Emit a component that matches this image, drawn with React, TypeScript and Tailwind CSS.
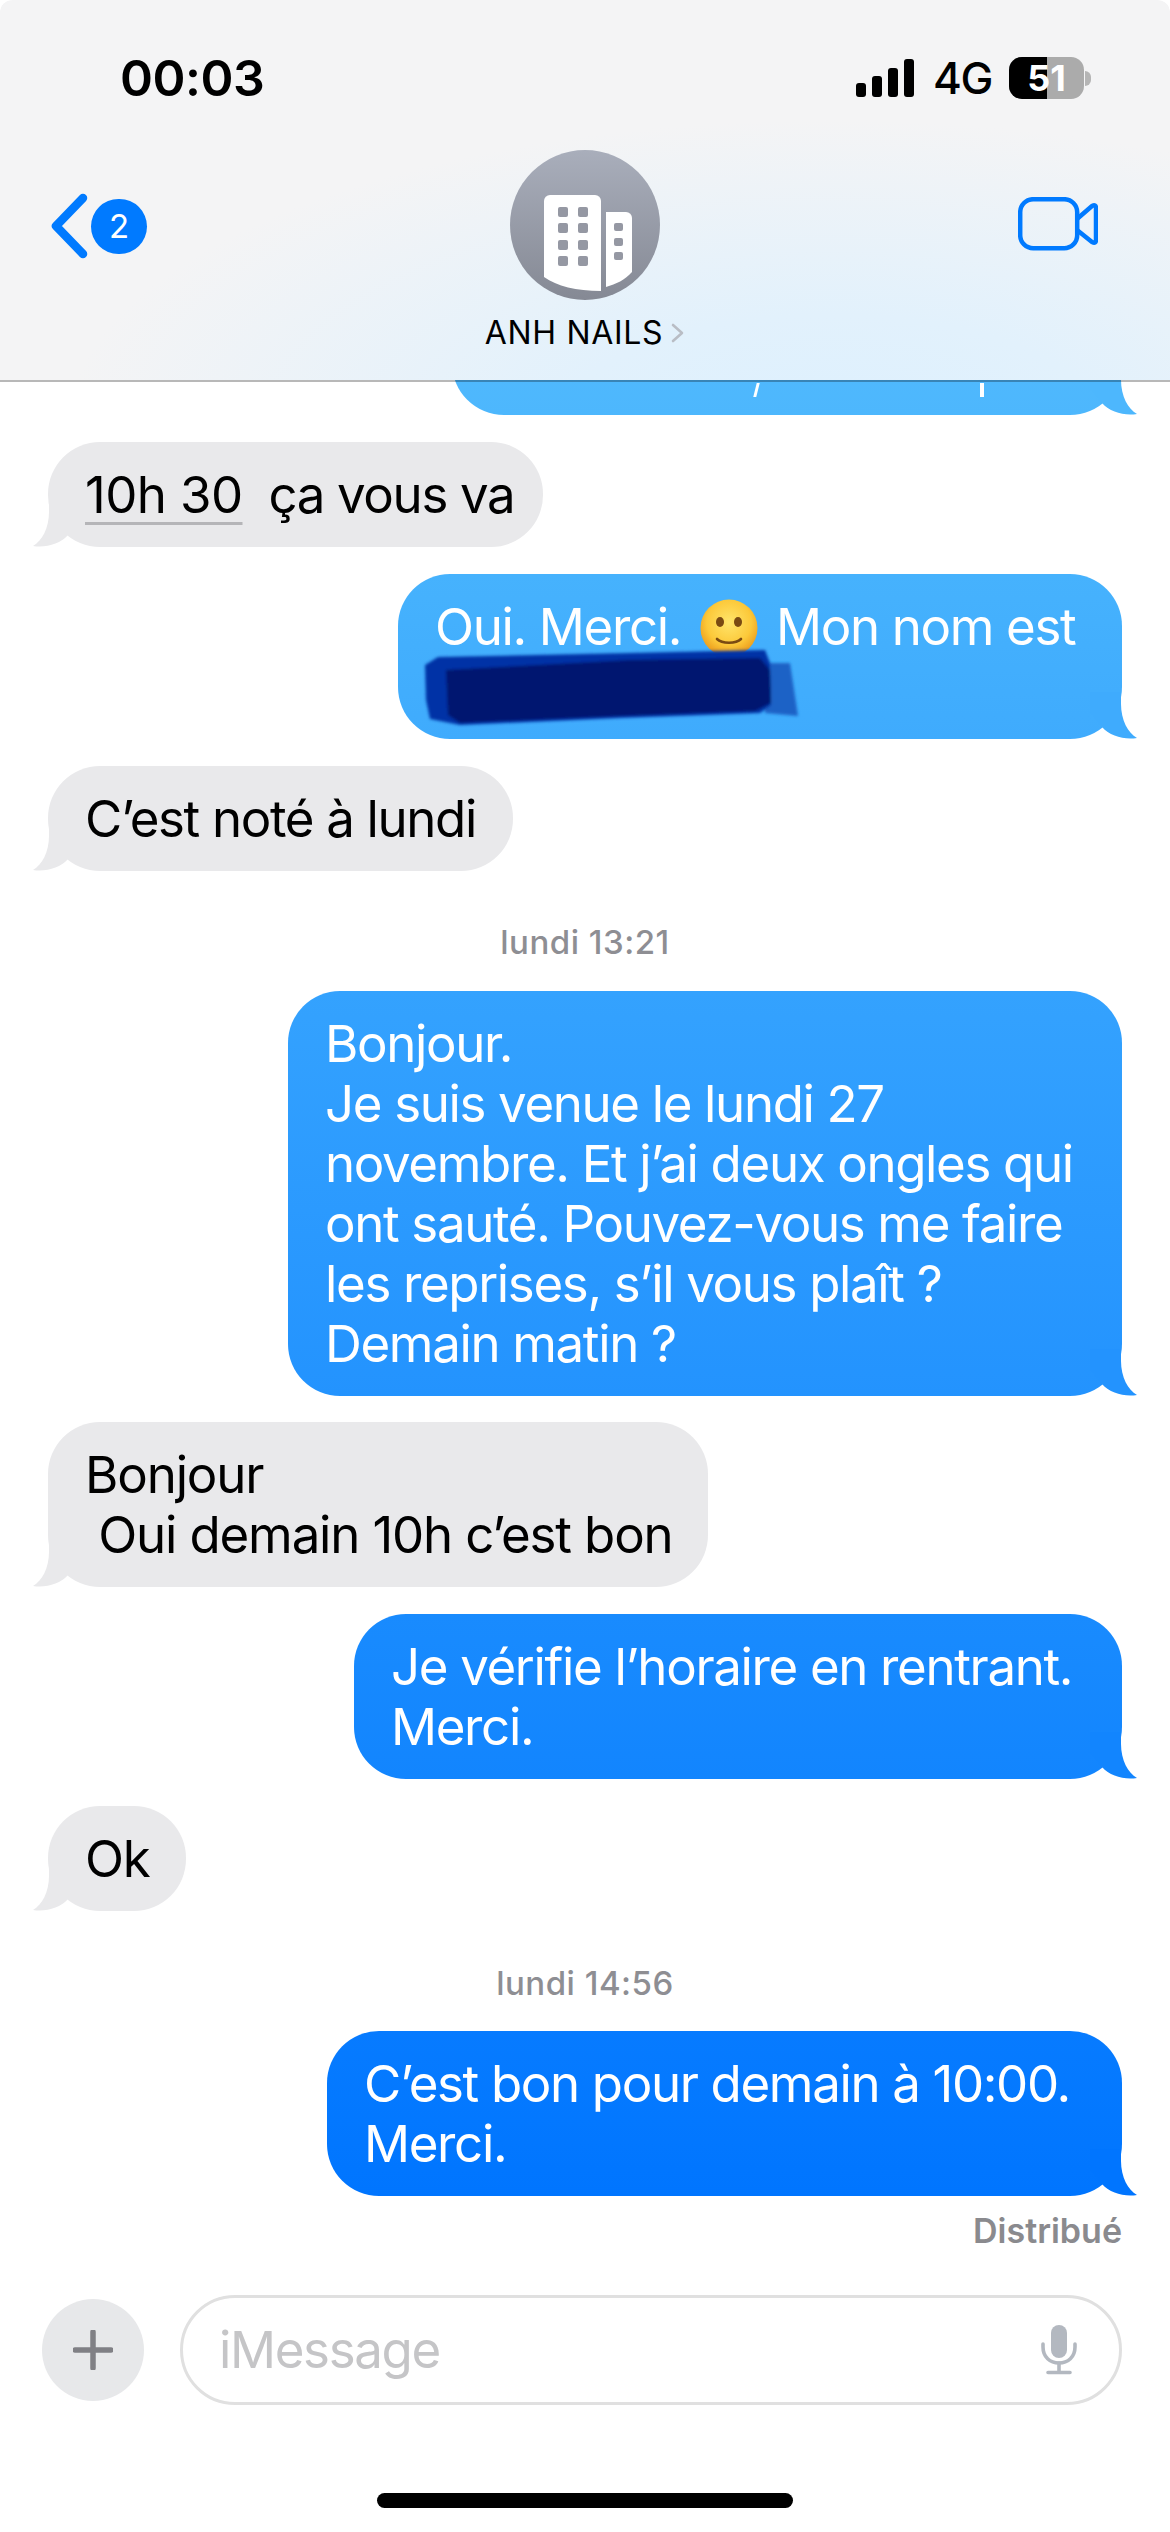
import React from "react";

function Tail({ side, color }: { side: "l" | "r"; color: string }) {
  return (
    <svg
      viewBox="0 0 50 47"
      className={`absolute bottom-0 w-[50px] h-[47px] ${color} ${side === "r" ? "right-[-18px]" : "left-[-18px] -scale-x-100"}`}
    >
      <path fill="currentColor" d="M31 0 L31 12 C31 28 38 41 47 46 C34 48 20 44 12 35 L0 20 L0 0 Z" />
    </svg>
  );
}

function Sent({ bg, tail, className, children }: { bg: string; tail: string; className?: string; children: React.ReactNode }) {
  return (
    <div className={`relative self-end rounded-[52px] pl-[37px] pr-[37px] pt-[23px] pb-[22px] text-white whitespace-nowrap ${bg} ${className ?? ""}`}>
      {children}
      <Tail side="r" color={tail} />
    </div>
  );
}

function Received({ className, children }: { className?: string; children: React.ReactNode }) {
  return (
    <div className={`relative self-start rounded-[52px] bg-[#e9e9eb] px-[37px] pt-[23px] pb-[22px] text-black whitespace-nowrap ${className ?? ""}`}>
      {children}
      <Tail side="l" color="text-[#e9e9eb]" />
    </div>
  );
}

function Smile() {
  return (
    <svg viewBox="0 0 58 58" className="inline-block w-[58px] h-[58px] align-[-12px] ml-[6px] mr-[5px]">
      <defs>
        <radialGradient id="face" cx="50%" cy="40%" r="60%">
          <stop offset="0%" stopColor="#ffe56b" />
          <stop offset="65%" stopColor="#fcc93a" />
          <stop offset="100%" stopColor="#eb9a1a" />
        </radialGradient>
      </defs>
      <circle cx="29" cy="29" r="28.5" fill="url(#face)" />
      <ellipse cx="20" cy="23" rx="4" ry="5" fill="#7a4a12" />
      <ellipse cx="38" cy="23" rx="4" ry="5" fill="#7a4a12" />
      <path d="M17 40 C22 45 36 45 41 40" fill="none" stroke="#7a4a12" strokeWidth="2.6" strokeLinecap="round" />
    </svg>
  );
}

function Scribble() {
  return (
    <svg viewBox="0 0 460 180" className="absolute left-[-18px] top-[-4px] w-[460px] h-[180px] pointer-events-none">
      <defs>
        <filter id="soft" x="-5%" y="-5%" width="110%" height="110%">
          <feGaussianBlur stdDeviation="1.8" />
        </filter>
      </defs>
      <g filter="url(#soft)">
        <path d="M385 93 L410 93 L418 146 L385 143 Z" fill="#1c62c6" />
        <path d="M45 95 L58 87 L250 83 L385 80 L390 93 L391 135 L380 143 L240 148 L80 155 L50 149 L46 130 Z" fill="#0533a6" />
        <path d="M66 100 L250 90 L380 88 L390 100 L391 133 L375 141 L240 146 L80 153 L68 145 Z" fill="#00146f" />
      </g>
    </svg>
  );
}

export default function App() {
  return (
    <div className="relative flex h-[2532px] w-[1170px] flex-col overflow-hidden bg-white font-['Inter',sans-serif] text-[51px] leading-[60px] tracking-[-1.35px]">
      <header className="relative z-10 flex h-[382px] shrink-0 flex-col rounded-t-[12px] border-b-[2px] border-[rgba(0,0,0,0.28)] bg-[radial-gradient(ellipse_760px_300px_at_830px_420px,#ddf0fe_0%,#e2f1fc_35%,#f4f4f5_100%)] bg-clip-padding">
        <div className="flex items-start justify-between pl-[120px] pr-[79px] pt-[57px]">
          <span className="text-[50px] font-semibold leading-[42px] tracking-[-0.5px] text-black">00:03</span>
          <div className="flex items-center">
            <svg viewBox="0 0 58 38" className="h-[38px] w-[58px]">
              <rect x="0" y="24" width="10" height="14" rx="3" fill="#000" />
              <rect x="16" y="17" width="10" height="21" rx="3" fill="#000" />
              <rect x="32" y="9" width="10" height="29" rx="3" fill="#000" />
              <rect x="48" y="0" width="10" height="38" rx="3" fill="#000" />
            </svg>
            <span className="ml-[19px] w-[57px] text-[44px] font-medium leading-[42px] tracking-[-1.5px] text-black">4G</span>
            <div className="relative ml-[19px] flex h-[42px] w-[75px] items-center justify-center overflow-hidden rounded-[13px] bg-[#ababab]">
              <div className="absolute inset-y-0 left-0 w-[38px] bg-black" />
              <span className="relative text-[36px] font-bold leading-none tracking-normal text-white">51</span>
            </div>
            <div className="ml-[1px] h-[15px] w-[6px] rounded-r-full bg-[#b5b5b5]" />
          </div>
        </div>

        <div className="mt-[51px] flex items-start">
          <div className="flex flex-1 items-center pt-[43px]">
            <svg viewBox="0 0 38 66" className="ml-[50px] h-[66px] w-[38px]">
              <path d="M33 5 L6 33 L33 61" fill="none" stroke="#007aff" strokeWidth="8.5" strokeLinecap="round" strokeLinejoin="round" />
            </svg>
            <div className="ml-[3px] flex h-[55px] w-[56px] items-center justify-center rounded-full bg-[#007aff] text-[33px] leading-none tracking-normal text-white">2</div>
          </div>

          <div className="flex flex-col items-center">
            <svg viewBox="0 0 150 150" className="h-[150px] w-[150px]">
              <defs>
                <linearGradient id="av" x1="0" y1="0" x2="0" y2="1">
                  <stop offset="0%" stopColor="#a9aebb" />
                  <stop offset="100%" stopColor="#858994" />
                </linearGradient>
              </defs>
              <circle cx="75" cy="75" r="75" fill="url(#av)" />
              <path d="M34 51 a6 6 0 0 1 6 -6 h45 a6 6 0 0 1 6 6 V141 C66 141 47 136 34 127 Z" fill="#fff" />
              <path d="M96 62 h20 a6 6 0 0 1 6 6 V122 C115 130 106 134 96 137 Z" fill="#fff" />
              <g fill="#9598a3">
                <rect x="48" y="57" width="10" height="10" rx="2" />
                <rect x="68" y="57" width="10" height="10" rx="2" />
                <rect x="48" y="73" width="10" height="10" rx="2" />
                <rect x="68" y="73" width="10" height="10" rx="2" />
                <rect x="48" y="90" width="10" height="10" rx="2" />
                <rect x="68" y="90" width="10" height="10" rx="2" />
                <rect x="48" y="106" width="10" height="10" rx="2" />
                <rect x="68" y="106" width="10" height="10" rx="2" />
                <rect x="104" y="73" width="9" height="8" rx="2" />
                <rect x="104" y="88" width="9" height="8" rx="2" />
                <rect x="104" y="102" width="9" height="8" rx="2" />
              </g>
            </svg>
            <div className="mt-[13px] flex items-center">
              <span className="text-[32px] leading-[40px] tracking-[0.7px] text-black">ANH NAILS</span>
              <svg viewBox="0 0 14 20" className="ml-[8px] h-[20px] w-[14px]">
                <path d="M2 2 L11 10 L2 18" fill="none" stroke="#b9bdc5" strokeWidth="2.6" strokeLinecap="round" strokeLinejoin="round" />
              </svg>
            </div>
          </div>

          <div className="flex flex-1 justify-end pt-[47px]">
            <svg viewBox="0 0 80 54" className="mr-[72px] h-[54px] w-[80px]">
              <rect x="2.2" y="2.2" width="57" height="49" rx="13" fill="none" stroke="#007aff" strokeWidth="4.5" />
              <path d="M59 22 L74 9 Q78 7 78 11 V43 Q78 47 74 45 L59 33" fill="none" stroke="#007aff" strokeWidth="4.5" strokeLinejoin="round" />
            </svg>
          </div>
        </div>
      </header>

      <main className="flex flex-col px-[48px]">
        <Sent bg="bg-gradient-to-b from-[#52bafd] to-[#4db7fd]" tail="text-[#4db7fd]" className="-mt-[71px] h-[104px] w-[670px]">
          <div className="absolute left-[303px] top-[72px] h-[14px] w-[3px] skew-x-[-14deg] bg-white" />
          <div className="absolute left-[528px] top-[72px] h-[14px] w-[4px] bg-white" />
        </Sent>

        <Received className="mt-[27px] w-[495px]">
          <span className="underline decoration-[#b5b5b8] decoration-[3px] underline-offset-[9px] tracking-[-0.6px]">10h 30</span>
          <span className="whitespace-pre">{"  ça vous va"}</span>
        </Received>

        <Sent bg="bg-gradient-to-b from-[#46b2fd] to-[#3fabfd]" tail="text-[#3fabfd]" className="mt-[27px] w-[724px]">
          <div className="h-[60px]">
            Oui. Merci. <Smile /> Mon nom est
          </div>
          <div className="h-[60px]" />
          <Scribble />
        </Sent>

        <Received className="mt-[27px]">C’est noté à lundi</Received>

        <p className="mt-[51px] mb-[29px] text-center text-[33px] font-medium leading-[40px] tracking-[0.5px] text-[#8e8e93]">lundi 13:21</p>

        <Sent bg="bg-gradient-to-b from-[#34a2fe] to-[#2393fe]" tail="text-[#2393fe]" className="w-[834px]">
          <div>Bonjour.</div>
          <div>Je suis venue le lundi 27</div>
          <div>novembre. Et j’ai deux ongles qui</div>
          <div>ont sauté. Pouvez-vous me faire</div>
          <div>les reprises, s’il vous plaît ?</div>
          <div>Demain matin ?</div>
        </Sent>

        <Received className="mt-[26px] w-[660px] tracking-[-1.15px]">
          <div>Bonjour</div>
          <div className="whitespace-pre">{" Oui demain 10h c’est bon"}</div>
        </Received>

        <Sent bg="bg-gradient-to-b from-[#198bfe] to-[#1285fe]" tail="text-[#1285fe]" className="mt-[27px] w-[768px]">
          <div>Je vérifie l’horaire en rentrant.</div>
          <div>Merci.</div>
        </Sent>

        <Received className="mt-[27px]">Ok</Received>

        <p className="mt-[52px] mb-[28px] text-center text-[33px] font-medium leading-[40px] tracking-[0.5px] text-[#8e8e93]">lundi 14:56</p>

        <Sent bg="bg-gradient-to-b from-[#077bff] to-[#0075ff]" tail="text-[#0075ff]" className="w-[795px]">
          <div>C’est bon pour demain à 10:00.</div>
          <div>Merci.</div>
        </Sent>

        <p className="mt-[15px] self-end text-[34px] font-semibold leading-[40px] tracking-normal text-[#8a8a8e]">Distribué</p>

        <div className="-ml-[6px] mt-[44px] flex items-center">
          <div className="flex h-[102px] w-[102px] shrink-0 items-center justify-center rounded-full bg-[#e7e8ea]">
            <svg viewBox="0 0 40 40" className="h-[40px] w-[40px]">
              <path d="M20 2 V38 M2 20 H38" stroke="#808085" strokeWidth="5.5" strokeLinecap="round" fill="none" />
            </svg>
          </div>
          <div className="ml-[36px] flex h-[110px] flex-1 items-center justify-between rounded-full border-[3px] border-[#e0e0e0] pl-[36px] pr-[42px]">
            <span className="text-[#c5c5c7]">iMessage</span>
            <svg viewBox="0 0 36 50" className="h-[50px] w-[36px]">
              <rect x="10" y="0" width="16" height="33" rx="8" fill="#b3b8c0" />
              <path d="M2 19 V22 C2 32 9 38 18 38 C27 38 34 32 34 22 V19" fill="none" stroke="#b3b8c0" strokeWidth="3.6" strokeLinecap="round" />
              <path d="M18 38 V47 M7 47.5 H29" fill="none" stroke="#b3b8c0" strokeWidth="3.6" strokeLinecap="round" />
            </svg>
          </div>
        </div>

        <div className="mt-[88px] h-[15px] w-[416px] self-center rounded-full bg-black" />
      </main>
    </div>
  );
}
